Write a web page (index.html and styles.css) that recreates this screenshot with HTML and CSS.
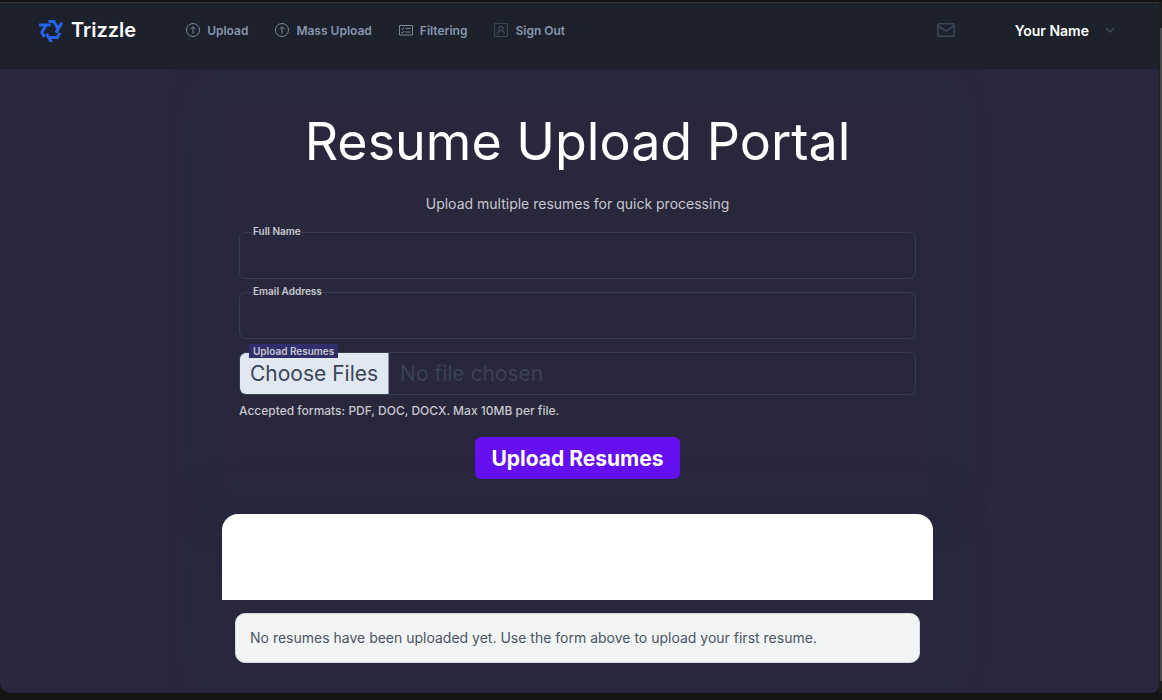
FILE: index.html
```html
<!DOCTYPE html>
<html lang="en">
<head>
<meta charset="utf-8">
<title>Resume Upload Portal</title>
<link rel="stylesheet" href="styles.css">
</head>
<body>
<div class="window">
  <div class="view">
    <header class="topbar">
      <a class="brand" href="#">
        <svg class="brand-mark" viewBox="0 0 24 24" fill="none" stroke="#2563eb" stroke-width="3" aria-hidden="true">
          <path id="arm" d="M0 7H11.500M6.800 7.500 2.800 14.500 5.500 19"/>
          <use href="#arm" transform="rotate(120 12 12.500)"/>
          <use href="#arm" transform="rotate(240 12 12.500)"/>
        </svg>
        <span>Trizzle</span>
      </a>
      <nav class="menu">
        <a href="#"><svg class="icon" viewBox="0 0 14 14" aria-hidden="true"><circle cx="7" cy="7" r="6.500"/><path d="M7 10.500V4M4.500 6.200 7 3.700l2.500 2.500"/></svg>Upload</a>
        <a href="#"><svg class="icon" viewBox="0 0 14 14" aria-hidden="true"><circle cx="7" cy="7" r="6.500"/><path d="M7 10.500V4M4.500 6.200 7 3.700l2.500 2.500"/></svg>Mass Upload</a>
        <a href="#"><svg class="icon" viewBox="0 0 14 14" aria-hidden="true"><path d="M.5 2.500h13v9.500H.5zM2.500 5.500l1 1 1.500-2M2.500 9l1 1 1.500-2M6.500 5.500h5M6.500 9h5"/></svg>Filtering</a>
        <a href="#"><svg class="icon icon-dim" viewBox="0 0 14 14" aria-hidden="true"><rect x=".5" y=".5" width="13" height="13" rx="1.500"/><circle cx="7" cy="5.500" r="2.200"/><path d="M3.500 11.500C3.500 9 5 7.700 7 7.700s3.500 1.300 3.500 3.800"/></svg>Sign Out</a>
      </nav>
      <div class="account">
        <button class="plain" aria-label="Messages"><svg class="mail" viewBox="0 0 18 14" aria-hidden="true"><rect x=".75" y=".75" width="16.500" height="12.500" rx="1.500"/><path d="M1 3l8 5 8-5"/></svg></button>
        <button class="plain user">Your Name<svg class="chevron" viewBox="0 0 10 6" aria-hidden="true"><path d="M1 1l4 4 4-4"/></svg></button>
      </div>
    </header>
    <main class="content">
      <section class="portal">
        <h1>Resume Upload Portal</h1>
        <p class="lead">Upload multiple resumes for quick processing</p>
        <form class="form">
          <div class="field">
            <label for="name">Full Name</label>
            <input class="text" id="name" type="text">
          </div>
          <div class="field">
            <label for="email">Email Address</label>
            <input class="text" id="email" type="email">
          </div>
          <div class="field field-file">
            <label class="tag" for="files">Upload Resumes</label>
            <input class="file" id="files" type="file" multiple>
          </div>
          <p class="hint">Accepted formats: PDF, DOC, DOCX. Max 10MB per file.</p>
          <button class="submit" type="submit">Upload Resumes</button>
        </form>
      </section>
      <section class="results">
        <div class="results-head"></div>
        <p class="notice">No resumes have been uploaded yet. Use the form above to upload your first resume.</p>
      </section>
    </main>
  </div>
  <div class="rail"><div class="thumb"></div></div>
</div>
</body>
</html>
```
FILE: styles.css
```css
* { box-sizing: border-box; }

body {
  margin: 0;
  background: #141414;
  font-family: Inter, "Liberation Sans", sans-serif;
  color: #fff;
}

.window {
  display: flex;
  height: 100vh;
  padding: 2px 0 7px;
  background: #141414;
}

.view {
  flex: 1;
  min-width: 0;
  overflow: hidden;
  border-top: 1px solid #353433;
  border-radius: 0 0 8px 10px;
  background: #29273c;
}

.rail {
  width: 3px;
  padding: 26px 0 12px 1px;
  background: #1f1f1f;
}

.thumb { height: 100%; background: #4a4a4a; }

.topbar {
  position: relative;
  z-index: 1;
  display: flex;
  align-items: flex-start;
  height: 66px;
  padding: 14px 44px 0 39px;
  background: #1c212c;
}

.brand {
  display: flex;
  align-items: center;
  gap: 8px;
  height: 26px;
  color: #fff;
  font-size: 20px;
  font-weight: 600;
  text-decoration: none;
}

.brand-mark { width: 24px; height: 24px; }

.menu {
  display: flex;
  align-items: center;
  gap: 27px;
  height: 26px;
  margin-left: 50px;
}

.menu a {
  display: flex;
  align-items: center;
  gap: 7px;
  color: #8896ad;
  font-size: 12px;
  font-weight: 600;
  text-decoration: none;
}

.icon, .mail, .chevron {
  fill: none;
  stroke: #7d899c;
  stroke-width: 1;
}

.icon { width: 14px; height: 14px; }
.icon-dim { stroke: #3c475a; stroke-width: 1.2; }

.account {
  display: flex;
  align-items: center;
  gap: 60px;
  height: 26px;
  margin-left: auto;
}

.plain {
  display: flex;
  align-items: center;
  padding: 0;
  border: 0;
  background: none;
  color: #fff;
  font: inherit;
}

.user { gap: 16px; font-size: 14px; font-weight: 600; }
.mail { width: 18px; height: 14px; stroke: #3b475b; stroke-width: 1.5; }
.chevron { width: 10px; height: 6px; stroke: #3b475b; stroke-width: 1.5; }

.content {
  display: grid;
  grid-template-columns: minmax(0, 711px);
  justify-content: center;
  padding-right: 4px;
}

.portal {
  margin-top: 28px;
  padding: 12px 17px 20px;
  border-radius: 16px;
  box-shadow: 0 0 50px rgba(36, 41, 64, 0.6);
}

h1 {
  margin: 0;
  font-size: 52px;
  font-weight: 400;
  line-height: 66px;
  text-align: center;
}

.lead {
  margin: 19px 0 18px;
  color: #c8c8ce;
  font-size: 14px;
  line-height: 20px;
  text-align: center;
}

.form { display: flex; flex-direction: column; }

.field { position: relative; margin-bottom: 13px; }
.field-file { margin-bottom: 7px; }

.field label {
  position: absolute;
  top: -8px;
  left: 10px;
  padding: 0 4px;
  color: #c8c8ce;
  font-size: 10px;
  font-weight: 600;
  line-height: 14px;
}

.field .tag { background: #312e6b; }

.text, .file {
  display: block;
  width: 100%;
  border: 1px solid #353f52;
  border-radius: 7px;
  background: transparent;
  color: #384256;
  font-family: inherit;
}

.text { height: 47px; padding: 0 14px; font-size: 16px; color: #fff; }

.file {
  height: 43px;
  overflow: hidden;
  font-size: 21px;
  line-height: 41px;
}

.file::file-selector-button {
  height: 41px;
  margin: 0 11px 0 0;
  padding: 0 10px;
  border: 0;
  border-right: 1px solid #8d94a5;
  background: #e1e8f1;
  color: #3a4558;
  font: inherit;
}

.hint {
  margin: 0 0 17px;
  color: #c8c8ce;
  font-size: 12px;
  font-weight: 500;
  line-height: 18px;
}

.submit {
  align-self: center;
  height: 42px;
  padding: 0 16px;
  border: 0;
  border-radius: 6px;
  background: #6610f2;
  color: #fff;
  font-family: inherit;
  font-size: 21px;
  font-weight: 700;
}

.results {
  margin-top: 15px;
  padding-bottom: 14px;
  border-radius: 16px;
  box-shadow: 0 0 50px rgba(36, 41, 64, 0.6);
}

.results-head {
  height: 86px;
  border-radius: 16px 16px 0 0;
  background: #fff;
}

.notice {
  margin: 13px 13px 0;
  padding: 15px 14px;
  border: 1px solid #d5d8de;
  border-radius: 10px;
  background: #f3f4f6;
  color: #4b5563;
  font-size: 14px;
  line-height: 18px;
}
```
